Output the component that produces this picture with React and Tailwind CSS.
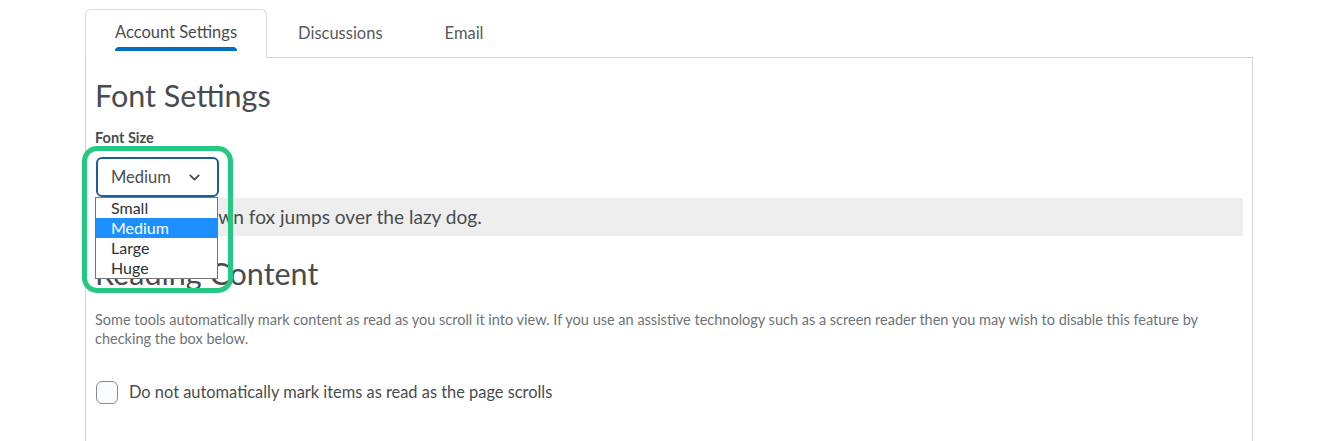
import { ChevronDown } from "lucide-react";

const font = { fontFamily: "Lato, 'Noto Sans', sans-serif" };

export default function App() {
  const options = ["Small", "Medium", "Large", "Huge"];

  return (
    <div className="min-h-screen bg-white text-[#494c4e]" style={font}>
      <div className="pl-[85px] pr-[76px] pt-[9px]">
        {/* TABS */}
        <div className="flex items-end">
          <div className="relative z-10 -mb-px h-[49px] bg-white border border-b-0 border-[#d3d9e3] rounded-t-md px-[29px] flex flex-col justify-center">
            <span className="text-[16.5px] leading-none mt-[7px]">Account Settings</span>
            <span className="mt-[6px] h-[4px] rounded-t bg-[#006fbf]" />
          </div>
          <div className="h-[48px] px-[31px] flex items-center pt-[1px] text-[16.5px] text-[#565a5c]">Discussions</div>
          <div className="h-[48px] px-[31px] flex items-center pt-[1px] text-[16.5px] text-[#565a5c]">Email</div>
        </div>

        {/* PANEL */}
        <div className="border border-[#d3d3d3] border-b-0 pl-[9px] pr-[9px] pt-[19px] pb-[40px]">
          <h1 className="text-[30.5px] leading-[36px] text-[#494c4e]">Font Settings</h1>

          <div className="mt-[17px] text-[14.5px] leading-[16px] font-bold text-[#494c4e]">Font Size</div>

          <div className="relative mt-[11px] ml-px w-[123px]">
            <div className="h-[40px] rounded-md border-2 border-[#1c5d9c] flex items-center justify-between pl-[13px] pr-[14px] text-[16.5px] text-[#494c4e] bg-white">
              <span>Medium</span>
              <ChevronDown size={17} strokeWidth={2.5} className="text-[#494c4e]" />
            </div>

            {/* open options list */}
            <div className="absolute z-20 left-[-1px] top-full w-[123px] bg-white border border-[#767676] text-[16px] leading-[20px] text-[#303234]">
              {options.map((o) => (
                <div
                  key={o}
                  className={
                    o === "Medium"
                      ? "h-[20px] pl-[15px] bg-[#1e8fff] text-white"
                      : "h-[20px] pl-[15px]"
                  }
                >
                  {o}
                </div>
              ))}
            </div>

            {/* highlight ring */}
            <div className="absolute z-30 left-[-14px] top-[-11px] w-[151px] h-[147px] rounded-[15px] border-[5px] border-[#25c883] pointer-events-none" />
          </div>

          <div className="h-[38px] mt-px bg-[#eeeeee] flex items-center pl-[9px] text-[19.1px] text-[#494c4e]">
            The quick brown fox jumps over the lazy dog.
          </div>

          <h2 className="mt-[19px] text-[30.5px] leading-[36px] text-[#494c4e]">Reading Content</h2>

          <p className="mt-[19px] text-[14.5px] leading-[19px] text-[#6e7376]">
            Some tools automatically mark content as read as you scroll it into view. If you use an assistive technology such as a screen reader then you may wish to disable this feature by checking the box below.
          </p>

          <label className="mt-[32px] flex items-center gap-[11px]">
            <span className="ml-px w-[22px] h-[23px] rounded-md border border-[#868c8f] bg-[#f9fbff]" />
            <span className="text-[16.4px] text-[#494c4e]">Do not automatically mark items as read as the page scrolls</span>
          </label>
        </div>
      </div>
    </div>
  );
}
